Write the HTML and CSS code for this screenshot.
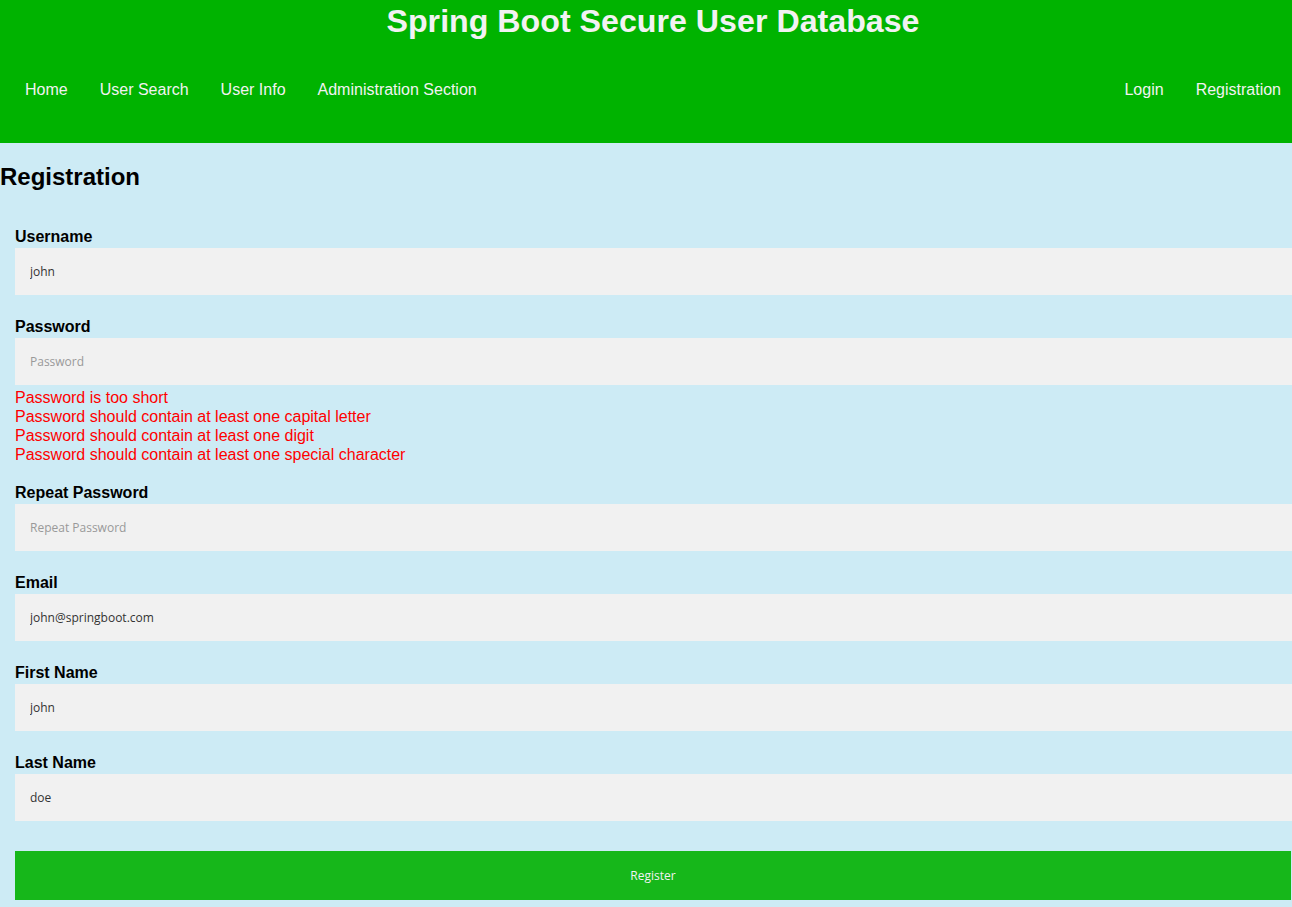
FILE: index.html
```html
<!DOCTYPE html>
<html lang="en">
<head>
<meta charset="utf-8">
<title>Registration</title>
<link rel="stylesheet" href="styles.css">
</head>
<body>
<div class="page">
  <header class="header">
    <h1 class="title">Spring Boot Secure User Database</h1>
    <nav class="nav">
      <div class="nav-group">
        <a class="nav-link" href="#">Home</a>
        <a class="nav-link" href="#">User Search</a>
        <a class="nav-link" href="#">User Info</a>
        <a class="nav-link" href="#">Administration Section</a>
      </div>
      <div class="nav-group nav-right">
        <a class="nav-link" href="#">Login</a>
        <a class="nav-link" href="#">Registration</a>
      </div>
    </nav>
  </header>
  <main class="main">
    <h2 class="heading">Registration</h2>
    <form class="form">
      <div class="field">
        <label class="label">Username</label>
        <input class="input" type="text" value="john">
      </div>
      <div class="field">
        <label class="label">Password</label>
        <input class="input" type="password" placeholder="Password">
        <div class="errors">
          <div>Password is too short</div>
          <div>Password should contain at least one capital letter</div>
          <div>Password should contain at least one digit</div>
          <div>Password should contain at least one special character</div>
        </div>
      </div>
      <div class="field">
        <label class="label">Repeat Password</label>
        <input class="input" type="password" placeholder="Repeat Password">
      </div>
      <div class="field">
        <label class="label">Email</label>
        <input class="input" type="text" value="john@springboot.com">
      </div>
      <div class="field">
        <label class="label">First Name</label>
        <input class="input" type="text" value="john">
      </div>
      <div class="field">
        <label class="label">Last Name</label>
        <input class="input" type="text" value="doe">
      </div>
      <button class="submit" type="button">Register</button>
    </form>
  </main>
</div>
</body>
</html>
```
FILE: styles.css
```css
html, body {
  margin: 0;
  padding: 0;
  overflow-x: hidden;
}
body {
  background: #cdebf5;
  font-family: "Liberation Sans", Arial, sans-serif;
  color: #000;
}
.page {
  width: calc(100% + 14px);
}
.header {
  background: #00b300;
  padding: 3px 9px 30px;
}
.title {
  margin: 0;
  font-size: 32.2px;
  line-height: 37px;
  font-weight: bold;
  text-align: center;
  color: #f2f2f2;
}
.nav {
  display: flex;
  margin-top: 27px;
}
.nav-group {
  display: flex;
}
.nav-right {
  margin-left: auto;
}
.nav-link {
  display: block;
  padding: 14px 16px;
  font-size: 16px;
  line-height: 18px;
  color: #f2f2f2;
  text-decoration: none;
}
.main {
  padding-top: 20px;
}
.heading {
  margin: 0;
  font-size: 24px;
  line-height: 28px;
  font-weight: bold;
}
.form {
  padding: 36px 15px 0;
}
.field {
  display: flex;
  flex-direction: column;
  margin-bottom: 22px;
}
.label {
  padding-top: 1px;
  font-size: 16px;
  line-height: 18px;
  font-weight: bold;
  height: 18px;
}
.input {
  box-sizing: border-box;
  width: calc(100% + 30px);
  height: 47px;
  margin-top: 2px;
  padding: 0 15px;
  border: none;
  outline: none;
  background: #f1f1f1;
  font-family: "Open Sans", sans-serif;
  font-size: 12px;
  color: #333;
}
.input::placeholder {
  color: #999;
}
.errors {
  margin-top: 3px;
  margin-bottom: -3px;
  color: #ff0000;
  font-size: 16px;
  line-height: 19px;
}
.submit {
  display: block;
  width: 100%;
  height: 49px;
  margin-top: 30px;
  border: none;
  background: #16b71a;
  color: #f2f2f2;
  font-family: "Open Sans", sans-serif;
  font-size: 12px;
  cursor: pointer;
}
```
